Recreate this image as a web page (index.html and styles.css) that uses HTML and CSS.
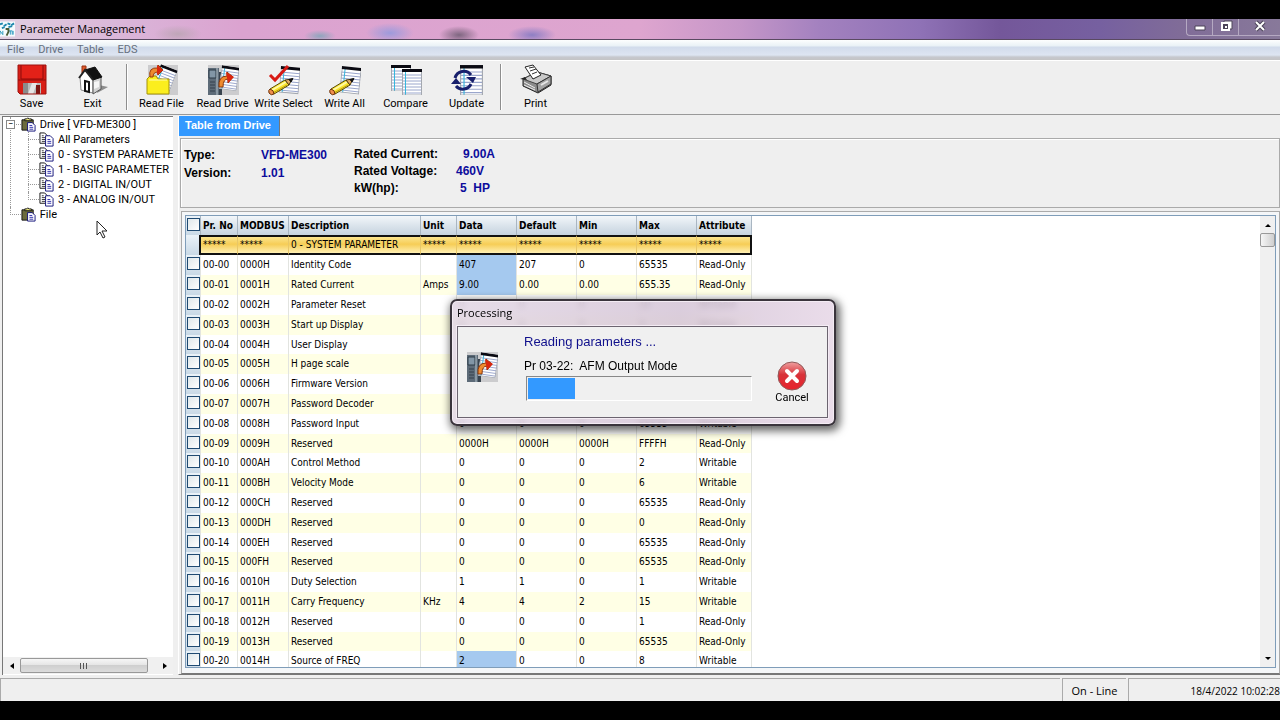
FILE: index.html
```html
<!DOCTYPE html>
<html lang="en">
<head>
    <meta charset="UTF-8">
    <meta name="viewport" content="width=device-width, initial-scale=1.0">
    <title>Parameter Management</title>
    <link rel="stylesheet" href="styles.css">
</head>
<body>
    <!-- shared icon shapes -->
    <svg class="sprites" aria-hidden="true">
        <symbol id="icon-note" viewBox="0 0 20 26">
            <rect width="20" height="26" fill="#fff"/>
            <path d="M0 6h20M0 9h20M0 12h20M0 15h20M0 18h20M0 21h20M0 24h20" stroke="#9aa6cc" stroke-width="1"/>
            <path d="M3.500 2v24" stroke="#35b6dc" stroke-width="1"/>
            <path d="M.5 0v26h19V0" fill="none" stroke="#a4a8b0" stroke-width="1"/>
            <rect width="20" height="3" fill="#0a0a12"/>
        </symbol>
        <symbol id="icon-pencil" viewBox="0 0 32 32">
            <path d="M2 25 17 16l4 5L6 30z" fill="#fbe62e" stroke="#5a4a08"/>
            <path d="M3.500 26.500 18 18" stroke="#fff9a8" stroke-width="2"/>
            <path d="M5 29l14-8" stroke="#b89a10"/>
            <path d="M2 25Q0 26 1 29q2 3 5 1 0-4-4-5z" fill="#f08f4e" stroke="#6b3208"/>
            <path d="M17 16l7-1-3 6z" fill="#e0aa66" stroke="#4b3a08"/>
            <path d="M21 15.500l4-1-2 3.500z" fill="#111" stroke="#111"/>
        </symbol>
        <symbol id="icon-drive" viewBox="0 0 32 32">
            <rect x="1" y="1" width="31" height="30" fill="#ccccce"/>
            <path d="M1 4h11v27H1z" fill="#5d6b78"/>
            <path d="M2 6h7v8H2z" fill="#8296a6" stroke="#2d3a46"/>
            <path d="M12 8h3v23h-3z" fill="#39444f"/>
            <path d="M3 18h5M3 21h5M3 24h5M3 27h5" stroke="#34414c"/>
            <path d="M10 4v27" stroke="#b8c6ce"/>
            <use href="#icon-note" width="18" height="24" transform="translate(15 1) rotate(8)"/>
            <path d="M12 23Q11 12 20 12V8l6 5-5 6v-4q-5 0-5 8z" fill="#ee8a2e" stroke="#8a3508"/>
            <path d="M19 8l8 5-6 6z" fill="#d9260f"/>
        </symbol>
        <symbol id="icon-clip" viewBox="0 0 16 16">
            <path d="M1 3h12v11H1z" fill="#6b6b3c" stroke="#111"/>
            <path d="M4 4V2h2l1-1 2 1h2v2z" fill="#e8e37c" stroke="#111"/>
            <path d="M7 6h5l3 3v6H7z" fill="#fff" stroke="#12127a"/>
            <path d="M9 9h3M9 11h4M9 13h4" stroke="#2a2aa8"/>
        </symbol>
        <symbol id="icon-pages" viewBox="0 0 16 16">
            <path d="M1 1h5l3 3v8H1z" fill="#fff" stroke="#111"/>
            <path d="M3 4h2M3 6h4M3 8h4M3 10h4" stroke="#333"/>
            <path d="M7 4h5l3 3v8H7z" fill="#fff" stroke="#12127a"/>
            <path d="M9 8h3M9 10h4M9 12h4" stroke="#2a2aa8"/>
        </symbol>
    </svg>

    <div class="window">
        <header class="titlebar">
            <svg class="app-icon" viewBox="0 0 16 16">
                <rect width="16" height="16" fill="#f4fbfd"/>
                <path d="M0 3l3-1M4 5l3-2M8 2l3 1M12 4l3-2M2 7l3-1M9 6l4-1" stroke="#1d86ac" stroke-width="2" fill="none"/>
                <path d="M0 10v4M0 10l3 4v-4M11 10v4M9 10h4v4M14 10v4" stroke="#2798bd" fill="none"/>
                <path d="M6 8h3v3l-2 4" stroke="#4a5c38" stroke-width="2" fill="none"/>
            </svg>
            <h1>Parameter Management</h1>
            <div class="window-buttons">
                <button aria-label="Minimize"><svg viewBox="0 0 14 12"><path d="M2 6h10v4H2z" fill="#fff" stroke="#4c4458"/></svg></button>
                <button aria-label="Restore"><svg viewBox="0 0 14 12"><path d="M5 1h8v8H5z" fill="#fff" stroke="#4c4458"/><path d="M3 3h7v7H3z" fill="#4c4458" stroke="#fff" stroke-width="2"/><path d="M6 6h2v2H6z" fill="#fff"/></svg></button>
                <button class="close" aria-label="Close"><svg viewBox="0 0 14 12"><path d="M3 2l8 8M11 2l-8 8" stroke="#4c4458" stroke-width="4"/><path d="M3 2l8 8M11 2l-8 8" stroke="#fff" stroke-width="2"/></svg></button>
            </div>
        </header>

        <nav class="menubar">
            <a href="#">File</a>
            <a href="#">Drive</a>
            <a href="#">Table</a>
            <a href="#">EDS</a>
        </nav>

        <div class="toolbar">
            <button>
                <svg viewBox="0 0 32 32">
                    <path d="M2 1h28v29H4l-2-2z" fill="#d81e16"/>
                    <path d="M5 1v14h22V1" fill="#e32118" stroke="#8d0d0a"/>
                    <path d="M2 16h28" stroke="#8d0d0a"/>
                    <path d="M7 19h18v11H7z" fill="#b9b9b9"/>
                    <path d="M7 19h5v11H7z" fill="#8b8b8b"/>
                    <path d="M16 19h5l-4 11h-5z" fill="#e6e6e6"/>
                    <path d="M20 21h4v9h-4z" fill="#7c1512"/>
                    <path d="M2 1h28v29H4l-2-2z" fill="none" stroke="#9d120e"/>
                </svg>
                Save
            </button>
            <button>
                <svg viewBox="0 0 32 32">
                    <path d="M20 29l11-6-9-2z" fill="#8d8d8d"/>
                    <path d="M5 2h4v7H5z" fill="#e0592a" stroke="#963010"/>
                    <path d="M3 13l5-7 8 9v14l-12-3z" fill="#fff" stroke="#888"/>
                    <path d="M16 15l8-2v12l-8 5z" fill="#d2d2d2" stroke="#555"/>
                    <path d="M8 6l10-3 7 10-9 3z" fill="#111" stroke="#111"/>
                    <path d="M2 14l6-8 8 10" fill="none" stroke="#222" stroke-width="2"/>
                    <path d="M8 17l4 1v10l-4-1z" fill="#fff" stroke="#111" stroke-width="2"/>
                    <path d="M17 18l5-1v6l-5 2z" fill="#f5f5f5"/>
                </svg>
                Exit
            </button>
            <span class="separator"></span>
            <button>
                <svg viewBox="0 0 32 32">
                    <rect x="2" y="1" width="30" height="30" fill="#ccccce"/>
                    <use href="#icon-note" width="18" height="24" transform="translate(15 0) rotate(21)"/>
                    <path d="M1 15l3-3h6l2 3h11v15H1z" fill="#fbee1e" stroke="#a49208"/>
                    <path d="M3 16h18" stroke="#fffbb4"/>
                    <path d="M4 13Q2 3 12 4V1l5 5-5 5V8q-5 0-5 5z" fill="#ee8a2e" stroke="#9a3b0a"/>
                    <path d="M11 1l6 5-6 5z" fill="#d9260f"/>
                </svg>
                Read File
            </button>
            <button>
                <svg viewBox="0 0 32 32"><use href="#icon-drive"/></svg>
                Read Drive
            </button>
            <button>
                <svg viewBox="0 0 32 32">
                    <use href="#icon-note" width="20" height="28" transform="translate(13 1) rotate(5)"/>
                    <path d="M2 11l5 5L20 2" fill="none" stroke="#d81a14" stroke-width="3"/>
                    <use href="#icon-pencil"/>
                </svg>
                Write Select
            </button>
            <button>
                <svg viewBox="0 0 32 32">
                    <use href="#icon-note" width="20" height="28" transform="translate(13 1) rotate(6)"/>
                    <use href="#icon-pencil"/>
                </svg>
                Write All
            </button>
            <button>
                <svg viewBox="0 0 32 32">
                    <use href="#icon-note" x="1" y="1" width="20" height="26"/>
                    <use href="#icon-note" x="12" y="5" width="20" height="26"/>
                </svg>
                Compare
            </button>
            <button>
                <svg viewBox="0 0 32 32">
                    <use href="#icon-note" x="9" y="1" width="23" height="30"/>
                    <path d="M4 14A9 9 0 0 1 20 11M20 20A9 9 0 0 1 5 22" fill="none" stroke="#18206c" stroke-width="3"/>
                    <path d="M15 13h10l-3 6zM0 20l5-6 5 6z" fill="#18206c"/>
                </svg>
                Update
            </button>
            <span class="separator"></span>
            <button>
                <svg viewBox="0 0 32 32">
                    <path d="M3 15l14-7 14 4v9L18 29 3 22z" fill="#8c8c8c" stroke="#222"/>
                    <path d="M3 15l14-7 14 4-14 8z" fill="#c9c9c9" stroke="#444"/>
                    <path d="M17 20l14-8v8l-13 8z" fill="#a3a3a3" stroke="#333"/>
                    <path d="M5 3l8-2 8 10-8 4z" fill="#fff" stroke="#222"/>
                    <path d="M9 4l5-1M10 7l6-2M12 10l5-2" stroke="#333"/>
                    <path d="M4 18l11 6M4 21l11 5" stroke="#eee"/>
                    <path d="M0 15l5-2 2 3z" fill="#222"/>
                    <path d="M21 21l7-4" stroke="#e6e6e6" stroke-width="2"/>
                </svg>
                Print
            </button>
        </div>

        <main class="content">
            <aside class="tree-panel">
                <ul class="tree">
                    <li>
                        <button class="toggle" aria-label="Collapse">−</button>
                        <svg viewBox="0 0 16 16"><use href="#icon-clip"/></svg>
                        <span>Drive [ VFD-ME300 ]</span>
                        <ul>
                            <li><svg viewBox="0 0 16 16"><use href="#icon-pages"/></svg><span>All Parameters</span></li>
                            <li><svg viewBox="0 0 16 16"><use href="#icon-pages"/></svg><span>0 - SYSTEM PARAMETER</span></li>
                            <li><svg viewBox="0 0 16 16"><use href="#icon-pages"/></svg><span>1 - BASIC PARAMETER</span></li>
                            <li><svg viewBox="0 0 16 16"><use href="#icon-pages"/></svg><span>2 - DIGITAL IN/OUT</span></li>
                            <li><svg viewBox="0 0 16 16"><use href="#icon-pages"/></svg><span>3 - ANALOG IN/OUT</span></li>
                        </ul>
                    </li>
                    <li>
                        <svg viewBox="0 0 16 16"><use href="#icon-clip"/></svg>
                        <span>File</span>
                    </li>
                </ul>
                <div class="scroll-x">
                    <button aria-label="Scroll left"><svg viewBox="0 0 8 8"><path d="M6 1v6L2 4z"/></svg></button>
                    <div class="thumb"><i></i><i></i><i></i></div>
                    <button aria-label="Scroll right"><svg viewBox="0 0 8 8"><path d="M2 1v6l4-3z"/></svg></button>
                </div>
            </aside>

            <section class="table-panel">
                <button class="tab">Table from Drive</button>
                <div class="info">
                    <dl class="info-drive">
                        <dt>Type:</dt><dd>VFD-ME300</dd>
                        <dt>Version:</dt><dd>1.01</dd>
                    </dl>
                    <dl class="info-rated">
                        <dt>Rated Current:</dt><dd class="current">9.00A</dd>
                        <dt>Rated Voltage:</dt><dd>460V</dd>
                        <dt>kW(hp):</dt><dd class="power">5&nbsp; HP</dd>
                    </dl>
                </div>
                <div class="grid-frame">
                    <div class="grid-view">
                        <table>
                            <colgroup>
                                <col class="c-check"><col class="c-no"><col class="c-modbus"><col class="c-desc"><col class="c-unit">
                                <col class="c-value"><col class="c-value"><col class="c-value"><col class="c-value"><col class="c-attr">
                            </colgroup>
                            <thead>
                                <tr>
                                    <th><input type="checkbox" aria-label="Select all"></th>
                                    <th>Pr. No</th>
                                    <th>MODBUS</th>
                                    <th>Description</th>
                                    <th>Unit</th>
                                    <th>Data</th>
                                    <th>Default</th>
                                    <th>Min</th>
                                    <th>Max</th>
                                    <th>Attribute</th>
                                </tr>
                                <tr class="group">
                                    <td></td>
                                    <td>*****</td>
                                    <td>*****</td>
                                    <td>0 - SYSTEM PARAMETER</td>
                                    <td>*****</td>
                                    <td>*****</td>
                                    <td>*****</td>
                                    <td>*****</td>
                                    <td>*****</td>
                                    <td>*****</td>
                                </tr>
                            </thead>
                            <tbody id="rows"></tbody>
                        </table>
                        <div class="scroll-y">
                            <button aria-label="Scroll up"><svg viewBox="0 0 8 8"><path d="M1 6h6L4 3z"/></svg></button>
                            <div class="thumb"></div>
                            <button class="down" aria-label="Scroll down"><svg viewBox="0 0 8 8"><path d="M1 2h6L4 5z"/></svg></button>
                        </div>
                    </div>
                </div>
            </section>
        </main>

        <footer class="statusbar">
            <span class="message"></span>
            <span class="link-state">On - Line</span>
            <span class="clock">18/4/2022 10:02:28</span>
        </footer>
    </div>

    <div class="dialog" role="dialog" aria-labelledby="dialogTitle">
        <h2 id="dialogTitle">Processing</h2>
        <div class="dialog-body">
            <svg class="dialog-icon" viewBox="0 0 32 32"><use href="#icon-drive"/></svg>
            <div class="dialog-text">
                <p class="task">Reading parameters ...</p>
                <label for="progress">Pr 03-22:&nbsp; AFM Output Mode</label>
                <progress id="progress" max="100" value="21"></progress>
            </div>
            <button class="cancel">
                <svg viewBox="0 0 30 30">
                    <defs>
                        <linearGradient id="red" x1="0" y1="0" x2="0" y2="1">
                            <stop offset="0" stop-color="#f0a0a0"/>
                            <stop offset=".45" stop-color="#d8333a"/>
                            <stop offset="1" stop-color="#e8222c"/>
                        </linearGradient>
                    </defs>
                    <circle cx="15" cy="15" r="14" fill="url(#red)" stroke="#8f5a5a"/>
                    <path d="M10 10l10 10M20 10L10 20" stroke="#fff" stroke-width="4" stroke-linecap="round"/>
                </svg>
                Cancel
            </button>
        </div>
    </div>

    <svg class="cursor" viewBox="0 0 12 19"><path d="M1 1v14l3-3 3 6 2-1-3-6h5z" fill="#fff" stroke="#222"/></svg>

    <script src="script.js"></script>
</body>
</html>
```
FILE: styles.css
```css
* {
    margin: 0;
    padding: 0;
    box-sizing: border-box;
}

body {
    height: 100vh;
    padding: 19px 0;
    background: #000;
    color: #000;
    font-family: "Liberation Sans", Arial, sans-serif;
    font-size: 11px;
    overflow: hidden;
}

button {
    border: none;
    background: none;
    font: inherit;
    color: inherit;
}

ul {
    list-style: none;
}

.sprites {
    position: absolute;
    width: 0;
    height: 0;
}

.window {
    height: 100%;
    display: flex;
    flex-direction: column;
    background: #efefef;
    overflow: hidden;
}

/* title bar */
.titlebar {
    height: 21px;
    flex: none;
    display: flex;
    align-items: center;
    gap: 5px;
    border-bottom: 1px solid #5a4a62;
    background:
        radial-gradient(ellipse 24px 9px at 178px 15px, #bfa6b8, transparent),
        radial-gradient(ellipse 16px 6px at 320px 17px, #8fa5bd, transparent),
        radial-gradient(ellipse 24px 10px at 390px 14px, #9d9bdc, transparent),
        radial-gradient(ellipse 20px 9px at 459px 16px, #7e6680, transparent),
        radial-gradient(ellipse 24px 9px at 532px 16px, #8e7fc4, transparent),
        linear-gradient(to right, #e0cfe0 0, #dab4d8 130px, #dba3d0 240px, #dea5cf 640px, #c596c8 740px, #a381bf 820px, #8f72b6 920px, #74579a 1000px, #7660a0 1100px, #806c98 1180px, #88799a 100%);
}

.app-icon {
    width: 15px;
    height: 16px;
}

.titlebar h1 {
    flex: 1;
    padding-bottom: 2px;
    font: 11px "Open Sans", "Segoe UI", sans-serif;
}

.window-buttons {
    align-self: flex-start;
    height: 17px;
    display: flex;
    border: 1px solid #b5a9c2;
    border-top: none;
    border-right: none;
    border-radius: 0 0 0 4px;
}

.window-buttons button {
    width: 26px;
    border-right: 1px solid #b5a9c2;
}

.window-buttons .close {
    width: 41px;
    border-right: none;
}

.window-buttons svg {
    width: 14px;
    height: 12px;
}

/* menu */
.menubar {
    height: 21px;
    flex: none;
    display: flex;
    align-items: center;
    gap: 14px;
    padding: 0 7px 3px;
    background: linear-gradient(#fdfefe 0, #e9f1f6 6px, #d1dbeb 7px, #dde5f2 15px, #c6c8ce 17px, #c4c4c6 20px, #fff 20px);
}

.menubar a {
    color: #66707e;
    font-family: Roboto, sans-serif;
    text-decoration: none;
}

/* toolbar */
.toolbar {
    height: 54px;
    flex: none;
    display: flex;
    padding-left: 1px;
    border-bottom: 1px solid #999;
    font-family: Roboto, sans-serif;
}

.toolbar button {
    width: 61px;
    display: flex;
    flex-direction: column;
    align-items: center;
    gap: 1px;
    padding-top: 3px;
    white-space: nowrap;
}

.toolbar svg {
    width: 32px;
    height: 32px;
    flex: none;
}

.separator {
    width: 2px;
    height: 46px;
    margin: 3px;
    border-left: 1px solid #8e8e8e;
    border-right: 1px solid #fff;
}

/* main area */
.content {
    flex: 1;
    min-height: 0;
    display: flex;
    gap: 5px;
    padding: 1px 0 3px 2px;
}

.tree-panel {
    width: 171px;
    flex: none;
    display: flex;
    flex-direction: column;
    background: #fff;
    border-left: 1px solid #777;
    border-top: 1px solid #777;
    overflow: hidden;
}

.tree {
    flex: 1;
    margin-left: 7px;
    font-family: Roboto, sans-serif;
}

.tree li {
    position: relative;
    padding-left: 11px;
    line-height: 15px;
    white-space: nowrap;
}

.tree li::before {
    content: "";
    position: absolute;
    left: 0;
    top: 7px;
    width: 11px;
    border-top: 1px dotted #999;
}

.tree li::after {
    content: "";
    position: absolute;
    left: 0;
    top: 0;
    bottom: 0;
    border-left: 1px dotted #999;
}

.tree li:last-child::after {
    bottom: auto;
    height: 8px;
}

.tree svg {
    width: 15px;
    height: 15px;
    vertical-align: top;
}

.tree span {
    margin-left: 1px;
}

.tree ul {
    margin-left: 7px;
}

.tree ul span {
    margin-left: 4px;
}

.tree .toggle {
    position: absolute;
    z-index: 1;
    left: -4px;
    top: 3px;
    width: 9px;
    height: 9px;
    border: 1px solid #888;
    background: #fff;
    line-height: 7px;
    font-size: 9px;
}

.scroll-x {
    height: 17px;
    flex: none;
    display: flex;
    margin-bottom: 1px;
    background: #f0f0f0;
}

.scroll-x button {
    width: 17px;
}

.scroll-x button svg,
.scroll-y button svg {
    width: 8px;
    height: 8px;
}

.scroll-x .thumb {
    width: 128px;
    height: 15px;
    margin: 1px 8px 0 0;
    display: flex;
    justify-content: center;
    align-items: center;
    gap: 1px;
    border: 1px solid #999;
    border-radius: 2px;
    background: linear-gradient(#f6f6f6, #e4e4e4 50%, #cfcfcf 50%, #dcdcdc);
}

.thumb i {
    width: 2px;
    height: 6px;
    border-left: 1px solid #555;
}

.table-panel {
    flex: 1;
    min-width: 0;
    display: flex;
    flex-direction: column;
    align-items: flex-start;
    border-left: 1px solid #fff;
    border-bottom: 1px solid #777;
}

.tab {
    height: 20px;
    flex: none;
    padding: 0 8px 2px 6px;
    border-right: 1px solid #777;
    background: #3399ff;
    color: #fff;
    font-weight: bold;
}

.info {
    align-self: stretch;
    height: 70px;
    flex: none;
    display: flex;
    gap: 26px;
    margin: 2px 0 3px 1px;
    padding: 7px 3px 0;
    border: 1px solid #aaa;
    box-shadow: inset 1px 1px #fff;
    font-size: 12px;
    font-weight: bold;
}

.info dl {
    display: grid;
    align-content: start;
}

.info-drive {
    grid-template-columns: 77px 67px;
    line-height: 18px;
}

.info-rated {
    grid-template-columns: 102px 60px;
    line-height: 17px;
}

.info dd {
    color: #0c0c9c;
}

.info .current {
    padding-left: 7px;
}

.info .power {
    padding-left: 4px;
}

.grid-frame {
    align-self: stretch;
    flex: 1;
    min-height: 0;
    margin-left: 2px;
    padding: 3px 3px 5px;
    border: 1px solid #aaa;
    border-bottom-color: #777;
    background: #f4f6f8;
}

.grid-view {
    height: 100%;
    display: flex;
    justify-content: space-between;
    align-items: flex-start;
    border: 1px solid #7f9db9;
    background: #fff;
    overflow: hidden;
}

table {
    table-layout: fixed;
    width: 566px;
    border-collapse: separate;
    border-spacing: 0;
    font-family: "DejaVu Sans Condensed", "DejaVu Sans", Tahoma, sans-serif;
    font-size: 10px;
}

.c-check { width: 15px; }
.c-no { width: 37px; }
.c-modbus { width: 51px; }
.c-desc { width: 132px; }
.c-unit { width: 36px; }
.c-value { width: 60px; }
.c-attr { width: 55px; }

th,
td {
    height: 20px;
    padding-left: 2px;
    border-right: 1px solid #e2e4e0;
    text-align: left;
    line-height: 16px;
    white-space: nowrap;
}

tbody tr:nth-child(5n) td {
    height: 19px;
}

th {
    height: 19px;
    background: linear-gradient(#f3f7fa, #dbe4ec 50%, #c6d3df);
    border-right-color: #a9b6c2;
}

tbody tr:nth-child(even) td {
    background: #ffffe5;
}

th:first-child,
td:first-child,
tbody tr:nth-child(even) td:first-child {
    padding: 2px 0 0 1px;
    background: linear-gradient(#eaf2f8, #c9d9e6);
    vertical-align: top;
}

tbody td.changed,
tbody tr:nth-child(even) td.changed {
    background: #a5c9ef;
}

.group td {
    border-top: 2px solid #111;
    border-bottom: 2px solid #111;
    border-right-color: #e8c768;
    background: linear-gradient(#fbe48e, #f6cd56 45%, #fff0b4);
}

.group td:first-child {
    border-top: none;
    border-bottom: none;
    border-right: 2px solid #111;
    background: linear-gradient(#eaf2f8, #c9d9e6);
}

.group td:last-child {
    border-right: 2px solid #111;
}

input[type="checkbox"] {
    appearance: none;
    display: block;
    width: 13px;
    height: 13px;
    border: 1px solid #1f4a72;
    background: linear-gradient(135deg, #dfe7ea, #fff);
}

.scroll-y {
    width: 15px;
    align-self: stretch;
    display: flex;
    flex-direction: column;
    background: #f0f0f0;
}

.scroll-y button {
    height: 17px;
}

.scroll-y .thumb {
    flex: none;
    height: 14px;
    border: 1px solid #999;
    border-radius: 2px;
    background: linear-gradient(to right, #f6f6f6, #cfcfcf);
}

.scroll-y .down {
    margin-top: auto;
}

/* status bar */
.statusbar {
    height: 23px;
    flex: none;
    display: flex;
    gap: 2px;
    line-height: 24px;
    font-family: "Open Sans", "Segoe UI", sans-serif;
}

.statusbar span {
    border-left: 1px solid #aaa;
    border-top: 1px solid #aaa;
}

.message {
    flex: 1;
}

.link-state {
    width: 64px;
    text-align: center;
}

.clock {
    width: 152px;
    font-size: 10px;
    text-align: right;
}

/* progress dialog */
.dialog {
    position: absolute;
    left: 450px;
    top: 299px;
    width: 386px;
    padding: 0 6px 6px 5px;
    border: 2px solid #3a343c;
    border-radius: 7px;
    background: linear-gradient(to right, rgba(226, 214, 228, 0.85), rgba(212, 196, 214, 0.85) 60%, rgba(230, 214, 230, 0.85));
    backdrop-filter: blur(3px);
    box-shadow: inset 0 0 0 1px #f4ecf4, 2px 3px 9px 2px rgba(0, 0, 0, 0.6);
}

.dialog h2 {
    height: 25px;
    font: 11px "Open Sans", "Segoe UI", sans-serif;
    line-height: 24px;
}

.dialog-body {
    height: 92px;
    display: flex;
    border: 1px solid #6c6470;
    outline: 1px solid #f4ecf4;
    background: #f0f0f0;
}

.dialog-icon {
    width: 32px;
    height: 32px;
    margin: 24px 26px 0 8px;
}

.dialog-text {
    width: 228px;
    padding-top: 7px;
    font-size: 12px;
}

.dialog-text p,
.dialog-text label {
    display: block;
    line-height: 16px;
}

.dialog-text .task {
    margin-bottom: 8px;
    color: #10108c;
    font-size: 13px;
}

progress {
    appearance: none;
    display: block;
    width: 226px;
    height: 25px;
    margin: 2px 0 0 2px;
    padding: 1px;
    border: 1px solid #fff;
    border-top-color: #888;
    border-left-color: #888;
    background: #f0f0f0;
}

progress::-webkit-progress-bar {
    background: #f0f0f0;
}

progress::-webkit-progress-value {
    background: #3399ff;
}

.cancel {
    width: 60px;
    margin-left: 10px;
    padding-top: 34px;
    display: flex;
    flex-direction: column;
    align-items: center;
    font-family: Roboto, sans-serif;
}

.cancel svg {
    width: 30px;
    height: 30px;
    flex: none;
}

/* mouse pointer */
.cursor {
    position: absolute;
    left: 96px;
    top: 220px;
    width: 12px;
    height: 19px;
}
```
FILE: script.js
```javascript
// number, description, unit, data, default, min, max, attribute, data differs from default
const params = [
    ['00', 'Identity Code', '', '407', '207', '0', '65535', 'Read-Only', true],
    ['01', 'Rated Current', 'Amps', '9.00', '0.00', '0.00', '655.35', 'Read-Only', true],
    ['02', 'Parameter Reset', '', '0', '0', '0', '10', 'Writable'],
    ['03', 'Start up Display', '', '0', '0', '0', '3', 'Writable'],
    ['04', 'User Display', '', '3', '3', '0', '26', 'Writable'],
    ['05', 'H page scale', '', '0', '0', '0', '65535', 'Writable'],
    ['06', 'Firmware Version', '', '0', '0', '0', '65535', 'Read-Only'],
    ['07', 'Password Decoder', '', '0', '0', '0', '65535', 'Writable'],
    ['08', 'Password Input', '', '0', '0', '0', '65535', 'Writable'],
    ['09', 'Reserved', '', '0000H', '0000H', '0000H', 'FFFFH', 'Read-Only'],
    ['10', 'Control Method', '', '0', '0', '0', '2', 'Writable'],
    ['11', 'Velocity Mode', '', '0', '0', '0', '6', 'Writable'],
    ['12', 'Reserved', '', '0', '0', '0', '65535', 'Read-Only'],
    ['13', 'Reserved', '', '0', '0', '0', '0', 'Read-Only'],
    ['14', 'Reserved', '', '0', '0', '0', '65535', 'Read-Only'],
    ['15', 'Reserved', '', '0', '0', '0', '65535', 'Read-Only'],
    ['16', 'Duty Selection', '', '1', '1', '0', '1', 'Writable'],
    ['17', 'Carry Frequency', 'KHz', '4', '4', '2', '15', 'Writable'],
    ['18', 'Reserved', '', '0', '0', '0', '1', 'Read-Only'],
    ['19', 'Reserved', '', '0', '0', '0', '65535', 'Read-Only'],
    ['20', 'Source of FREQ', '', '2', '0', '0', '8', 'Writable', true]
];

const rows = document.getElementById('rows');

params.forEach(([no, desc, unit, data, def, min, max, attr, changed], i) => {
    const modbus = i.toString(16).toUpperCase().padStart(4, '0') + 'H';
    const tr = document.createElement('tr');
    tr.innerHTML = `
        <td><input type="checkbox" aria-label="Select 00-${no}"></td>
        <td>00-${no}</td>
        <td>${modbus}</td>
        <td>${desc}</td>
        <td>${unit}</td>
        <td class="${changed ? 'changed' : ''}">${data}</td>
        <td>${def}</td>
        <td>${min}</td>
        <td>${max}</td>
        <td>${attr}</td>`;
    rows.appendChild(tr);
});
```
